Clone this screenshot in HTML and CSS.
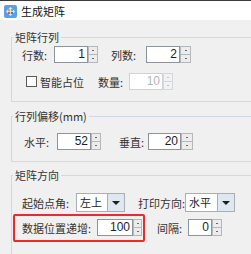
FILE: index.html
```html
<!DOCTYPE html>
<html lang="zh-CN">
<head>
  <meta charset="UTF-8" />
  <title>生成矩阵</title>
  <link rel="stylesheet" href="styles.css">
</head>
<body>

  <div class="titlebar">
    <svg class="app-icon" width="13" height="13" viewBox="0 0 13 13">
      <rect x="0" y="0" width="13" height="13" rx="2" fill="#5aa0e6"/>
      <path d="M6.5 2 L11 6.5 L6.5 11 L2 6.5 Z" fill="#d8ecff"/>
      <circle cx="5" cy="5" r="1.2" fill="#f29a38"/>
      <circle cx="8" cy="5" r="1.2" fill="#6cc24a"/>
      <circle cx="5" cy="8" r="1.2" fill="#e94c4c"/>
      <circle cx="8" cy="8" r="1.2" fill="#3b7dd8"/>
    </svg>
    <span class="title">生成矩阵</span>
  </div>

  <div class="dialog">
    <fieldset class="group g-rows">
      <legend>矩阵行列</legend>
      <div class="rows">
        <div class="row">
          <span class="lbl w32">行数:</span>
          <div class="spinbox"><span class="num w34">1</span><span class="spin"><i></i><i></i></span></div>
          <span class="lbl w35 ml13">列数:</span>
          <div class="spinbox"><span class="num w34">2</span><span class="spin w11"><i></i><i></i></span></div>
        </div>
        <div class="row">
          <span class="check"></span>
          <span class="lbl">智能占位</span>
          <span class="lbl w31 ml14">数量:</span>
          <div class="spinbox off"><span class="num w34">10</span><span class="spin"><i></i><i></i></span></div>
        </div>
      </div>
    </fieldset>

    <fieldset class="group g-offset">
      <legend>行列偏移(mm)</legend>
      <div class="rows">
        <div class="row">
          <span class="lbl w33 ml2">水平:</span>
          <div class="spinbox"><span class="num w34">52</span><span class="spin"><i></i><i></i></span></div>
          <span class="lbl w29 ml18">垂直:</span>
          <div class="spinbox"><span class="num w33">20</span><span class="spin w12"><i></i><i></i></span></div>
        </div>
      </div>
    </fieldset>

    <fieldset class="group g-dir">
      <legend>矩阵方向</legend>
      <div class="rows">
        <div class="row tall">
          <span class="lbl w54">起始点角:</span>
          <div class="select w49"><span class="val">左上</span><span class="drop"></span></div>
          <span class="lbl w47 ml13">打印方向:</span>
          <div class="select w50"><span class="val">水平</span><span class="drop"></span></div>
        </div>
        <div class="row">
          <div class="mark">
            <span class="lbl w75">数据位置递增:</span>
            <div class="spinbox"><span class="num w36">100</span><span class="spin w9"><i></i><i></i></span></div>
          </div>
          <span class="lbl w31 ml12">间隔:</span>
          <div class="spinbox"><span class="num w24">0</span><span class="spin"><i></i><i></i></span></div>
        </div>
      </div>
    </fieldset>
  </div>

</body>
</html>
```

FILE: styles.css
```css
body {
  margin: 0;
  width: 251px;
  height: 254px;
  overflow: hidden;
  background: #f0f0f0;
  color: #333;
  font-family: "Noto Sans CJK SC", "Liberation Sans", sans-serif;
  font-size: 11px;
  line-height: 14px;
}
.titlebar {
  height: 19px;
  border-top: 1px solid #3a3a3a;
  background: #fff;
  display: flex;
  align-items: center;
  gap: 4px;
  padding-left: 4px;
}
.app-icon {
  margin-top: 1px;
}
.title {
  color: #111;
  font-size: 11px;
}
.dialog {
  height: 234px;
  padding-left: 11px;
  overflow: hidden;
}
.group {
  margin: 0;
  padding: 0;
  width: 270px;
  border: 1px solid #cddae6;
  min-width: 0;
}
.group legend {
  padding: 0 2px;
  margin-left: 1px;
  line-height: 14px;
  color: #333;
}
.g-rows {
  margin-top: 10px;
}
.g-rows .rows {
  padding: 2px 0 11px 10px;
}
.g-offset {
  margin-top: 7px;
}
.g-offset .rows {
  padding: 10px 0 11px 10px;
}
.g-dir {
  margin-top: 6px;
  height: 90px;
}
.g-dir .rows {
  padding: 11px 0 0 10px;
  gap: 7px;
}
.rows {
  display: flex;
  flex-direction: column;
  gap: 10px;
}
.row {
  display: flex;
  align-items: center;
  height: 17px;
}
.row.tall {
  height: 19px;
}
.lbl {
  flex: none;
  white-space: nowrap;
}
.w24 { width: 24px; }
.w29 { width: 29px; }
.w31 { width: 31px; }
.w32 { width: 32px; }
.w33 { width: 33px; }
.w34 { width: 34px; }
.w35 { width: 35px; }
.w36 { width: 36px; }
.w47 { width: 47px; }
.w49 { width: 49px; }
.w50 { width: 50px; }
.w54 { width: 54px; }
.w75 { width: 75px; }
.ml2 { margin-left: 2px; }
.ml12 { margin-left: 12px; }
.ml13 { margin-left: 13px; }
.ml14 { margin-left: 14px; }
.ml18 { margin-left: 18px; }

.spinbox {
  display: flex;
  height: 17px;
  flex: none;
}
.num {
  box-sizing: border-box;
  height: 17px;
  border: 1px solid #8d949c;
  background: #fff;
  text-align: right;
  padding-right: 2px;
  font-family: "Liberation Sans", sans-serif;
  font-size: 12px;
  line-height: 15px;
  color: #1c1c2c;
}
.spin {
  width: 10px;
  display: flex;
  flex-direction: column;
}
.spin.w9 { width: 9px; }
.spin.w11 { width: 11px; }
.spin.w12 { width: 12px; }
.spin i {
  flex: 1;
  box-sizing: border-box;
  border: 1px solid #b4b8bd;
  background: #ececec;
  position: relative;
}
.spin i + i {
  border-top: none;
}
.spin i::after {
  content: "";
  position: absolute;
  left: 50%;
  top: 50%;
  width: 2px;
  height: 1px;
  margin: -1px 0 0 -1px;
  background: #6a6a6a;
}
.off .num {
  border-color: #cdd3d9;
  color: #b5b5b5;
}
.off .spin i {
  border-color: #d4d7db;
  background: #f2f2f2;
}
.off .spin i::after {
  background: #c4c4c4;
}

.check {
  box-sizing: border-box;
  width: 11px;
  height: 11px;
  margin: 0 3px 0 4px;
  border: 1px solid #5a5a5a;
  background: #fff;
}

.select {
  display: flex;
  box-sizing: border-box;
  height: 19px;
  border: 1px solid #a7aeb6;
  background: #fff;
  flex: none;
}
.select .val {
  flex: 1;
  padding-left: 3px;
  line-height: 17px;
  color: #222;
}
.select .drop {
  width: 16px;
  border-left: 1px solid #a7aeb6;
  background: #dfe7f0;
  display: flex;
  align-items: center;
  justify-content: center;
}
.select .drop::after {
  content: "";
  border-left: 4px solid transparent;
  border-right: 4px solid transparent;
  border-top: 4px solid #1e1e1e;
}

.mark {
  box-sizing: border-box;
  display: flex;
  align-items: center;
  width: 132px;
  height: 28px;
  margin-left: -9px;
  padding-left: 7px;
  border: 2px solid #ea2b2b;
  border-radius: 2px;
  flex: none;
}
```
